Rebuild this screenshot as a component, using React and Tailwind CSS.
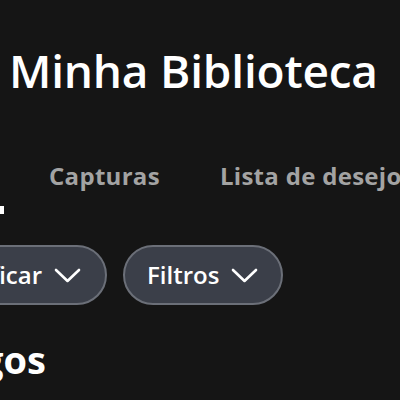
import React from 'react';

const Chevron = () => (
  <svg width="27" height="15" viewBox="0 0 27 15" fill="none" className="shrink-0">
    <polyline points="2,2 13.5,13 25,2" stroke="#ffffff" strokeWidth="2.6" strokeLinecap="round" strokeLinejoin="round" />
  </svg>
);

const Pill = ({ label, className }) => (
  <button
    type="button"
    className={`flex h-[60px] shrink-0 items-center gap-[12px] rounded-full border-2 border-[#6b6f78] bg-[#3b3f49] pl-[22px] pr-[24px] text-[24px] font-semibold text-white ${className}`}
  >
    <span className="leading-none">{label}</span>
    <Chevron />
  </button>
);

export default function App() {
  return (
    <div
      className="h-[400px] w-[400px] overflow-hidden bg-[#151515] text-white"
      style={{ fontFamily: '"Open Sans", "Noto Sans", sans-serif' }}
    >
      {/* Title */}
      <h1 className="ml-[9px] pt-[40px] text-[46px] font-semibold leading-[60px] tracking-[-0.2px] whitespace-nowrap">
        Minha Biblioteca
      </h1>

      {/* Tabs */}
      <div className="mt-[60px] flex items-start whitespace-nowrap text-[24px] font-bold tracking-[0.3px] text-[#a3a3a3]">
        <div className="-ml-[84px] flex w-[88px] shrink-0 flex-col">
          <span className="text-center text-white leading-[32px]">Jogos</span>
          <span className="mt-[14px] h-[8px] w-full bg-white" />
        </div>
        <span className="ml-[45px] leading-[32px]">Capturas</span>
        <span className="ml-[60px] leading-[32px]">Lista de desejos</span>
      </div>

      {/* Sort / filter */}
      <div className="mt-[31px] flex gap-[16px]">
        <Pill label="Classificar" className="-ml-[113px] w-[220px] justify-end" />
        <Pill label="Filtros" className="w-[160px]" />
      </div>

      {/* Section heading */}
      <div className="mt-[30px] -ml-[84px] w-[130px] text-right text-[38px] font-bold leading-[48px]">
        Jogos
      </div>
    </div>
  );
}
